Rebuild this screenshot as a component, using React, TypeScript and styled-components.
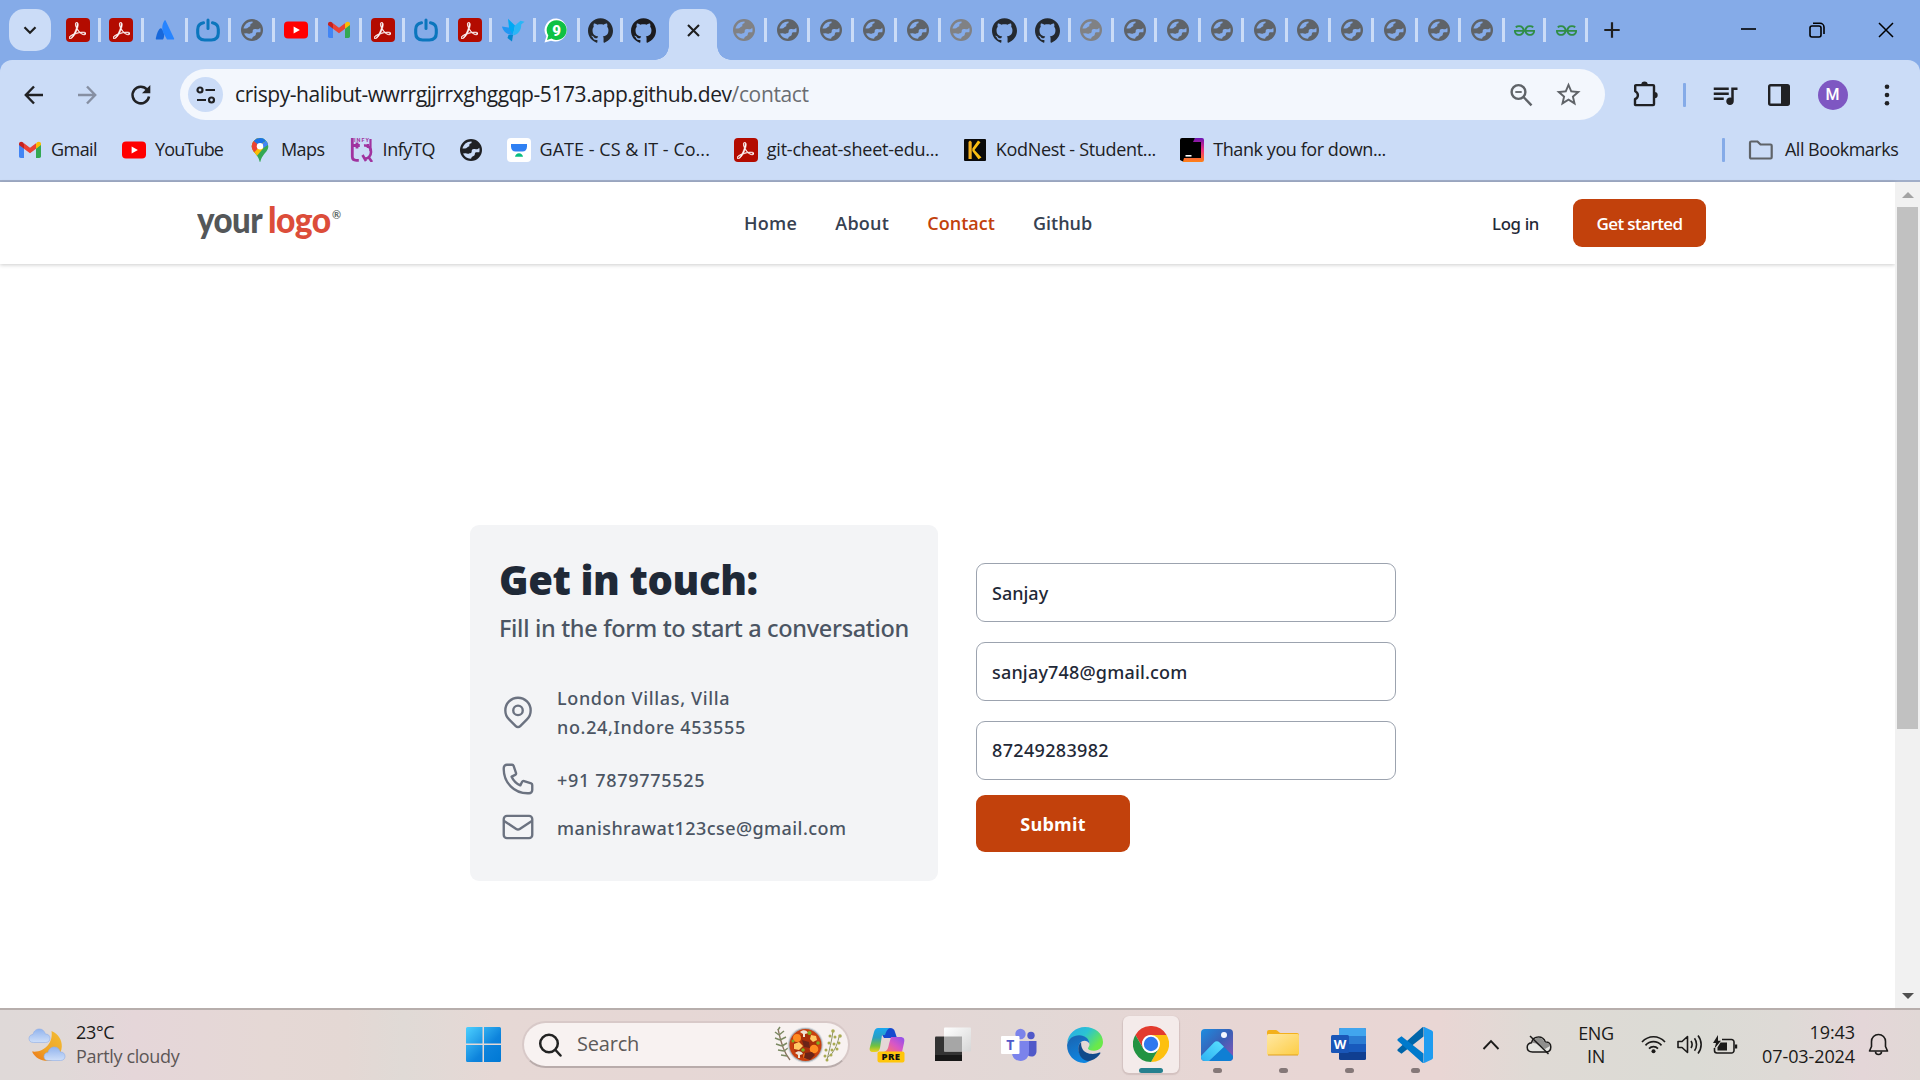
import React from 'react';
import styled, { createGlobalStyle } from 'styled-components';
import { SiGithub, SiGeeksforgeeks, SiAdobeacrobatreader } from 'react-icons/si';
import { MdQueueMusic, MdStarBorder } from 'react-icons/md';

const light = '"Open Sans", "Noto Sans", sans-serif';
const medium = '"Noto Sans", "Open Sans", sans-serif';

const GlobalStyle = createGlobalStyle`
  * { box-sizing: border-box; }
  body { margin: 0; background: #fff; }
  svg { display: block; flex: none; }
`;

const Screen = styled.div`
  width: 1920px;
  height: 1080px;
  display: flex;
  flex-direction: column;
  overflow: hidden;
  font-family: ${light};
  color: #202124;
`;

/* ---------- Tab strip ---------- */

const TabStrip = styled.div`
  height: 60px;
  flex: none;
  display: flex;
  align-items: center;
  background: #85abe8;
`;

const TabSearch = styled.div`
  width: 42px;
  height: 42px;
  margin: 0 6px 0 9px;
  border-radius: 15px;
  background: #cbdcf7;
  display: flex;
  align-items: center;
  justify-content: center;
`;

const Tab = styled.div<{ $w?: number; $last?: boolean }>`
  width: ${p => p.$w ?? 43.5}px;
  height: 24px;
  padding-left: 1px;
  flex: none;
  display: flex;
  align-items: center;
  justify-content: center;
  border-right: 3px solid ${p => (p.$last ? 'transparent' : '#cbdcf7')};
`;

const ActiveTab = styled.div`
  position: relative;
  width: 48px;
  height: 51px;
  flex: none;
  align-self: flex-end;
  margin: 0 6.5px 0 2.5px;
  padding-bottom: 9px;
  border-radius: 14px 14px 0 0;
  background: #cbdcf7;
  display: flex;
  align-items: center;
  justify-content: center;

  &::before,
  &::after {
    content: '';
    position: absolute;
    bottom: 0;
    width: 14px;
    height: 14px;
  }
  &::before {
    right: 100%;
    background: radial-gradient(circle at 0 0, transparent 13.5px, #cbdcf7 14px);
  }
  &::after {
    left: 100%;
    background: radial-gradient(circle at 100% 0, transparent 13.5px, #cbdcf7 14px);
  }
`;

const NewTab = styled.div`
  width: 24px;
  margin-left: 12px;
`;

const WindowControls = styled.div`
  display: flex;
  margin-left: auto;
`;

const WindowButton = styled.div`
  width: 68.6px;
  display: flex;
  justify-content: center;
`;

/* ---------- Toolbar ---------- */

const Chrome = styled.div`
  flex: none;
  background: #85abe8;
`;

const ChromeSurface = styled.div`
  height: 122px;
  background: #cbdcf7;
  border-bottom: 2px solid #a1aec8;
  border-radius: 12px 12px 0 0;
`;

const Toolbar = styled.div`
  height: 60px;
  padding-top: 9px;
  display: flex;
  align-items: center;
`;

const Navigation = styled.div`
  width: 180px;
  padding-left: 7px;
  display: flex;
`;

const Cell = styled.div<{ $w: number }>`
  width: ${p => p.$w}px;
  flex: none;
  display: flex;
  align-items: center;
  justify-content: center;
`;

const Omnibox = styled.div`
  width: 1425px;
  height: 51px;
  padding: 0 22px 0 8px;
  border-radius: 26px;
  background: #f3f7fd;
  display: flex;
  align-items: center;
`;

const SiteInfo = styled.div`
  width: 35px;
  height: 35px;
  margin-right: 12px;
  border-radius: 50%;
  background: #cbdcf7;
  display: flex;
  align-items: center;
  justify-content: center;
`;

const Url = styled.div`
  flex: 1;
  padding-bottom: 1px;
  font-size: 21px;
  line-height: 30px;
  letter-spacing: -0.43px;
  white-space: pre;
`;

const UrlPath = styled.span`
  color: #6a6d72;
  letter-spacing: -0.36px;
`;

const OmniboxIcons = styled.div`
  display: flex;
  align-items: center;
  gap: 20px;
  color: #5f6368;
`;

const Separator = styled.div`
  width: 3px;
  height: 24px;
  border-radius: 1px;
  background: #85abe8;
`;

const ToolbarActions = styled.div`
  display: flex;
  align-items: center;
  padding-left: 2px;

  ${Separator} {
    margin: 0 12px 0 -1px;
  }
`;

const Avatar = styled.div`
  width: 30px;
  height: 30px;
  border-radius: 50%;
  background: #7e57c2;
  color: #fff;
  font: 500 16px/30px Roboto, sans-serif;
  text-align: center;
`;

/* ---------- Bookmarks ---------- */

const Bookmarks = styled.div`
  height: 60px;
  padding-left: 18px;
  display: flex;
  align-items: center;
`;

const Bookmark = styled.div`
  display: flex;
  align-items: center;
  gap: 9px;
  margin-right: 24px;
`;

const BookmarkLabel = styled.span<{ $w: number; $track: number }>`
  width: ${p => p.$w}px;
  padding-bottom: 2px;
  font-size: 18px;
  line-height: 26px;
  letter-spacing: ${p => p.$track}px;
  white-space: pre;
`;

const AllBookmarks = styled.div`
  margin-left: auto;
  padding-right: 20px;
  display: flex;
  align-items: center;

  svg {
    margin: 0 11px 0 23px;
  }
`;

/* ---------- Web page ---------- */

const Viewport = styled.div`
  flex: 1;
  min-height: 0;
  display: flex;
`;

const Page = styled.div`
  width: 1895px;
  background: #fff;
`;

const Header = styled.header`
  height: 82px;
  padding: 0 189px 0 197px;
  display: flex;
  align-items: center;
  box-shadow: 0 1px 4px rgba(0, 0, 0, 0.2);
`;

const Logo = styled.div`
  width: 547px;
  padding-bottom: 4px;
  display: flex;
  align-items: flex-start;
`;

const LogoWord = styled.span<{ $w: number; $color: string; $scale: number }>`
  width: ${p => p.$w}px;
  padding-bottom: 4px;
  color: ${p => p.$color};
  font: 900 36.5px/44px Lato, sans-serif;
  letter-spacing: -0.6px;
  transform: scaleX(${p => p.$scale});
  transform-origin: left center;
  white-space: pre;
`;

const Registered = styled.span`
  padding-top: 10px;
  color: #66706e;
  font: 700 11px/16px Lato, sans-serif;
`;

const Nav = styled.nav`
  display: flex;
  gap: 38px;
`;

const NavLink = styled.a<{ $active?: boolean; $track?: number }>`
  color: ${p => (p.$active ? '#c2410c' : '#374151')};
  font: 600 18px/26px ${light};
  letter-spacing: ${p => p.$track ?? 0}px;
`;

const HeaderActions = styled.div`
  margin-left: auto;
  display: flex;
  align-items: center;
`;

const LogIn = styled.a`
  margin-right: 34px;
  padding-top: 1px;
  color: #1f2937;
  font: 500 16.8px/24px ${medium};
  letter-spacing: -0.35px;
`;

const PrimaryButton = styled.button<{ $w: number; $h: number; $size: number; $track: number; $weight: number }>`
  width: ${p => p.$w}px;
  height: ${p => p.$h}px;
  padding: 1px 0 0;
  border: 0;
  border-radius: 9px;
  background: #c2410c;
  color: #fff;
  font: ${p => p.$weight} ${p => p.$size}px/24px ${light};
  letter-spacing: ${p => p.$track}px;
`;

const Main = styled.main`
  padding: 261px 0 0 470px;
  display: flex;
  align-items: flex-start;
  gap: 38px;
`;

const Card = styled.section`
  width: 468px;
  height: 356px;
  padding: 30px 0 0 29px;
  border-radius: 9px;
  background: #f3f4f6;
`;

const Title = styled.h1`
  margin: 0;
  color: #1f2937;
  font: 900 40px/50px ${medium};
  letter-spacing: -0.4px;
  white-space: nowrap;
`;

const Subtitle = styled.p`
  margin: 5px 0 37px;
  color: #4b5563;
  font: 500 23.5px/36px ${medium};
  letter-spacing: -0.32px;
  white-space: nowrap;
`;

const ContactRow = styled.div<{ $gap?: number }>`
  margin-top: ${p => p.$gap ?? 0}px;
  min-height: 36px;
  display: flex;
  align-items: center;
  gap: 20px;
  color: #4b5563;
`;

const ContactText = styled.div<{ $track?: number }>`
  margin: 1px 0 -1px;
  font: 500 18px/29px ${medium};
  letter-spacing: ${p => p.$track ?? 0.65}px;
  white-space: pre-line;
`;

const ContactIcon = styled.svg`
  width: 38px;
  height: 38px;
  margin: -2px 0;
  fill: none;
  stroke: #6b7280;
  stroke-width: 1.5;
  stroke-linecap: round;
  stroke-linejoin: round;
`;

const Form = styled.form`
  padding-top: 38px;
  display: flex;
  flex-direction: column;
  align-items: flex-start;
`;

const Field = styled.input<{ $track?: number }>`
  width: 420px;
  height: 59.4px;
  margin-bottom: 19.5px;
  padding: 0 15px;
  border: 1px solid #9ca3af;
  border-radius: 9px;
  background: #fff;
  color: #1f2937;
  font: 500 18px/26px ${medium};
  letter-spacing: ${p => p.$track ?? 0}px;
  outline: none;
`;

const SubmitRow = styled.div`
  margin-top: -4.7px;
`;

const Scrollbar = styled.div`
  width: 25px;
  display: flex;
  flex-direction: column;
  align-items: center;
  justify-content: space-between;
  background: #f1f1f1;
`;

const Arrow = styled.div<{ $down?: boolean }>`
  width: 0;
  height: 0;
  margin: ${p => (p.$down ? '0 0 9px' : '10px 0 9px')};
  border: 6px solid transparent;
  border-top: ${p => (p.$down ? '6px solid #505050' : '0')};
  border-bottom: ${p => (p.$down ? '0' : '6px solid #a3a3a3')};
`;

const Thumb = styled.div`
  width: 21px;
  height: 522px;
  margin-bottom: auto;
  background: #c1c1c1;
`;

/* ---------- Taskbar ---------- */

const Taskbar = styled.div`
  height: 72px;
  padding-bottom: 1px;
  flex: none;
  display: flex;
  align-items: center;
  border-top: 2px solid #b7aeac;
  background: linear-gradient(90deg, #dfd9d8 0, #e0d9d8 3%, #e5d6d9 7%, #e5d8d5 14%, #e4d8d4 18%, #e0dad6 21%, #e6d8d5 26%, #e6d7d5 35%, #e4d7d6 48%, #e2d8d6 53%, #e7d6d4 63%, #e9d6d4 75%, #dfdad5 80%, #dbdbd5 88%, #dedad6 93%, #e4d6d8 97%, #e1d8d6 100%);
`;

const Weather = styled.div`
  width: 466px;
  padding-left: 28px;
  display: flex;
  align-items: center;
  gap: 10px;
`;

const Lines = styled.div<{ $align?: string; $w?: number; $lh: number; $track?: number; $lift?: number }>`
  width: ${p => (p.$w ? `${p.$w}px` : 'auto')};
  padding-bottom: ${p => p.$lift ?? 2}px;
  text-align: ${p => p.$align ?? 'left'};
  font-size: 18px;
  line-height: ${p => p.$lh}px;
  letter-spacing: ${p => p.$track ?? -0.35}px;
  color: #1b1a19;
  white-space: nowrap;
`;

const Muted = styled.div`
  color: #5c5656;
`;

const SearchBox = styled.div`
  width: 328px;
  height: 47px;
  margin: 0 4px 0 21px;
  padding: 0 6px 0 14px;
  display: flex;
  align-items: center;
  gap: 15px;
  border: 2px solid #d8c9c8;
  border-bottom-color: #b9acab;
  border-radius: 24px;
  background: #f8f2f1;
`;

const SearchText = styled.div`
  flex: 1;
  padding-bottom: 1px;
  color: #5d5a59;
  font-size: 20px;
  line-height: 28px;
  letter-spacing: -0.2px;
`;

const AppSlot = styled.div`
  position: relative;
  width: 66px;
  height: 69px;
  flex: none;
  display: flex;
  align-items: center;
  justify-content: center;
`;

const ActiveApp = styled.div`
  width: 56px;
  height: 57px;
  margin: 0 5px;
  padding-bottom: 1px;
  flex: none;
  display: flex;
  align-items: center;
  justify-content: center;
  position: relative;
  border-radius: 6px;
  background: #f4ebea;
  box-shadow: 0 1px 1px 1px rgba(120, 90, 90, 0.16);
`;

const Indicator = styled.div<{ $active?: boolean }>`
  position: absolute;
  bottom: ${p => (p.$active ? 0 : 6)}px;
  width: ${p => (p.$active ? 24 : 9)}px;
  height: 5px;
  border-radius: 3px;
  background: ${p => (p.$active ? '#26808f' : '#857878')};
`;

const Tray = styled.div`
  margin-left: 19px;
  display: flex;
  align-items: center;
`;

/* ---------- Favicons ---------- */

const PdfTile = styled.div`
  width: 24px;
  height: 24px;
  border-radius: 4px;
  background: #b30b00;
  color: #fff;
  display: flex;
  align-items: center;
  justify-content: center;
`;

const Pdf = () => (
  <PdfTile>
    <SiAdobeacrobatreader size={17} stroke="#fff" strokeWidth={0.8} />
  </PdfTile>
);

const Globe = ({ color = '#5f6368' }: { color?: string }) => (
  <svg width="24" height="24" viewBox="0 0 24 24" fill={color} fillRule="evenodd">
    <path d="M12 1a11 11 0 1 1 0 22 11 11 0 0 1 0-22zM12.500 3.400C8 3.200 4.200 6.500 3.500 10.600H6c2 0 2.300-2 4.300-2.300V7c0-1 .5-1.600 1.500-1.600.8 0 .9-1.100.7-2zM4 15.400c1.300 3 4.200 5.200 7.500 5.300 1.200 0 .7-1.300 1.600-2 1.300-1 2.700-.9 2.700-2.500s1-1.900 2-1.900h2.500c.4-1.700.3-3.200-.1-4.500-1.300 1.600-2.700 1.700-4.200 1.300-2-.5-3.300.2-3.300 2 0 1.500-.2 2-1.500 2.200-1.100.1-1.400.8-2.300.5-1.300-.5-1.800-.8-2.700-.6z" />
  </svg>
);

const Youtube = () => (
  <svg width="24" height="24" viewBox="0 0 24 24">
    <rect x="0" y="3.500" width="24" height="17" rx="4" fill="#f00" />
    <path d="M9.600 8.400v7.200l6.300-3.600z" fill="#fff" />
  </svg>
);

const Gmail = () => (
  <svg width="24" height="24" viewBox="0 0 24 24">
    <path d="M1 6v12.300c0 .9.7 1.700 1.700 1.700H6v-9.500z" fill="#4285f4" />
    <path d="M23 6v12.300c0 .9-.7 1.700-1.700 1.700H18v-9.500z" fill="#34a853" />
    <path d="M18 5.500v5.200l5-3.700V6c0-2.200-2.300-3-3.900-1.700z" fill="#fbbc04" />
    <path d="M6 10.700V5.200l6 4.500 6-4.500v5.500l-6 4.500z" fill="#ea4335" />
    <path d="M1 6v1l5 3.700V5.400L4.900 4.300C3.300 3 1 3.800 1 6z" fill="#c5221f" />
  </svg>
);

const Atlassian = () => (
  <svg width="24" height="24" viewBox="0 0 24 24">
    <path d="M8.500 10.500C6.800 8.800 4 14 2.800 20.600c-.1.600.2 1 .7 1h6.500c2-3.200 1.300-8.200-1.500-11.100z" fill="#1868db" />
    <path d="M11.500 2.600c-3 4.800-2.700 9.300-.7 13.200l2.900 5.300c.2.400.5.500.9.500h5.900c.5 0 .8-.5.600-1L12.600 2.600c-.3-.5-.8-.5-1.100 0z" fill="#2684ff" />
  </svg>
);

const Power = () => (
  <svg width="24" height="24" viewBox="0 0 24 24" fill="none" stroke="#0b76bd" strokeLinecap="round">
    <path d="M7.500 4.800C4 5.500 1.700 8 1.700 11.500V15c0 4.500 2.500 7 7 7h6.600c4.500 0 7-2.500 7-7v-3.500c0-3.500-2.300-6-5.800-6.700" strokeWidth="3.100" />
    <path d="M12 2v8.500" strokeWidth="3" />
  </svg>
);

const Bird = () => (
  <svg width="24" height="24" viewBox="0 0 24 24">
    <path d="M1 8.500l9 1.500 2 7.500C6.500 17 2 13.500 1 8.500z" fill="#2196f3" />
    <path d="M7 .8l7 6.700-2 9.500-4-7z" fill="#00a9f4" />
    <path d="M14 7.500l5.500-4.700 4 1-3.300 2.700C20.500 12 17 16.800 12 17.500z" fill="#29b6f6" />
    <path d="M7.500 17h4.500l-1 6.500-4.500-3.500z" fill="#0288d1" />
  </svg>
);

const Whatsapp = () => (
  <svg width="25" height="25" viewBox="0 0 25 25">
    <path d="M12.700.4A11.600 11.600 0 1 1 7 22.700L.5 24.500l1.900-6.300A11.600 11.600 0 0 1 12.700.4z" fill="#fff" />
    <path d="M12.700 2.200a9.900 9.900 0 1 1-5.200 18.300L3 21.900l1.300-4.500A9.900 9.900 0 0 1 12.700 2.200z" fill="#0fc143" />
    <text x="12.700" y="17.600" textAnchor="middle" fontFamily="Roboto, sans-serif" fontWeight="900" fontSize="15" fill="#fff">9</text>
  </svg>
);

const MapsPin = () => (
  <svg width="24" height="24" viewBox="0 0 24 24">
    <defs>
      <clipPath id="pin">
        <path d="M12 0a8.300 8.300 0 0 0-8.300 8.300c0 4 2.800 6 5.300 9.400C10.800 20 11.200 22 11.500 23.300c.1.900.9.900 1 0 .3-1.300.7-3.300 2.500-5.600 2.500-3.400 5.300-5.400 5.300-9.400A8.300 8.300 0 0 0 12 0z" />
      </clipPath>
    </defs>
    <g clipPath="url(#pin)">
      <path d="M0 0h24v24H0z" fill="#34a853" />
      <path d="M12 8.300L5.500 16 0 10V0h12z" fill="#fbbc04" />
      <path d="M20.500 4L8 19 4 14.500l9-10z" fill="#fbbc04" />
      <path d="M12 8.300L5 15.500-1 8 5.500 2z" fill="#ea4335" />
      <path d="M5.500 2.800L12 8.300 19 0H8z" fill="#1a73e8" />
      <path d="M12 8.300L19 1l2.500 5-6 4z" fill="#4285f4" />
    </g>
    <circle cx="12" cy="8.300" r="3.200" fill="#fff" />
  </svg>
);

const Infy = () => (
  <svg width="24" height="24" viewBox="0 0 24 24" fill="none" stroke="#a0339f">
    <text x="4" y="4.200" fontFamily="Roboto, sans-serif" fontWeight="700" fontSize="5.500" letterSpacing="1" fill="#a0339f" stroke="none">INFY</text>
    <path d="M2.300 0v18.500c0 2.500 1.500 3.800 4 3.800h2.500M2.300 7.500h7.500M7 4.500v6" strokeWidth="2.800" />
    <path d="M14 7.500c4-.5 7 2 7 6.500 0 3.500-2.500 6.500-6 6.500M12.500 17l3.500 6M22 24l-3.500-5M18 6v4" strokeWidth="2.600" />
    <path d="M20.500 1v12" strokeWidth="2.200" />
  </svg>
);

const Gate = () => (
  <svg width="24" height="24" viewBox="0 0 24 24">
    <rect width="24" height="24" rx="4" fill="#fff" />
    <path d="M4 6h16v2.500c0 3-1.800 5-4.500 5h-7C5.800 13.500 4 11.500 4 8.500z" fill="#2f80f3" />
    <path d="M8 18.700c.5-2.200 1.800-3.500 4-3.500s3.500 1.300 4 3.500z" fill="#08bd80" />
  </svg>
);

const KodNest = () => (
  <svg width="24" height="24" viewBox="-1 -1 24 24">
    <rect width="22" height="22" rx="1" fill="#0a0a0a" />
    <path d="M4.500 3L6 1.500 7.700 3v17H4.500z" fill="#f5b120" />
    <path d="M14 1.500l2.500 1.800-6 7.700 7 7.500-3 1.800L8.300 12v-2.500z" fill="#fbbf12" />
  </svg>
);

const JetBrains = () => (
  <svg width="24" height="24" viewBox="0 0 24 24">
    <defs>
      <linearGradient id="jb" x1="0" y1="0" x2="0" y2="1">
        <stop offset="0" stopColor="#6b12b4" />
        <stop offset=".5" stopColor="#f0317e" />
        <stop offset="1" stopColor="#ff8314" />
      </linearGradient>
    </defs>
    <path d="M15 0h7a2 2 0 0 1 2 2v20a2 2 0 0 1-2 2H3V20h17V4h-8z" fill="url(#jb)" />
    <path d="M2 0h13l-2 4h8v16H4l-1 3.500L0 22V2a2 2 0 0 1 2-2z" fill="#000" />
    <path d="M5.500 17.800h6" stroke="#fff" strokeWidth="1.600" />
  </svg>
);

const Extension = () => (
  <svg width="27" height="27" viewBox="0 0 27 27">
    <path d="M3.200 4.800c0-.4.300-.7.700-.7h17.200c.5 0 .9.400.9.900v18.200c0 .5-.4.900-.9.900H3.500c-.3 0-.5-.2-.5-.5v-5.400c1.700-.8 2.900-2.200 2.900-4s-1.200-3.200-2.700-4z" fill="none" stroke="#202124" strokeWidth="2.400" strokeLinejoin="round" />
    <path d="M9.300 3.800a3.200 3.200 0 0 1 6.400 0zM22.500 10.900a3.200 3.200 0 0 1 0 6.400z" fill="#202124" />
  </svg>
);

/* ---------- Taskbar icons ---------- */

const WeatherIcon = () => (
  <svg width="38" height="36" viewBox="0 0 38 36">
    <defs>
      <linearGradient id="moon" x1="1" y1="0" x2="0" y2="1">
        <stop offset="0" stopColor="#f3bd32" />
        <stop offset=".6" stopColor="#efa328" />
        <stop offset="1" stopColor="#ec7416" />
      </linearGradient>
      <linearGradient id="cloud" x1="0" y1="0" x2="0" y2="1">
        <stop offset="0" stopColor="#92b4ee" />
        <stop offset="1" stopColor="#cfdff9" />
      </linearGradient>
    </defs>
    <path d="M23.500 4c7 3 10.500 9 10.300 15.500C33.500 28 27 34 19.500 34 12.500 34 7 30.500 4 24.500 16 26 25.500 16 23.500 4z" fill="url(#moon)" />
    <path id="c" d="M5.500 15.500C2.500 15.500 1 14 1 11.500S3 7.500 5 7.500C6 3.500 8.500 2 11.500 2s5 2 5.800 5C20 7 22 8.500 22 11.200s-1.700 4.300-4.500 4.300z" fill="url(#cloud)" stroke="#8fafe8" strokeWidth=".6" />
    <use href="#c" x="15" y="18" />
  </svg>
);

const StartIcon = () => (
  <svg width="35" height="35" viewBox="0 0 35 35">
    <defs>
      <linearGradient id="win" gradientUnits="userSpaceOnUse" x1="0" y1="0" x2="35" y2="35">
        <stop offset="0" stopColor="#4cd0ff" />
        <stop offset=".6" stopColor="#0d83dc" />
        <stop offset="1" stopColor="#0078d4" />
      </linearGradient>
    </defs>
    <path d="M1.500 0h15v16.500H0v-15A1.500 1.500 0 0 1 1.500 0zM18 0h15.500A1.500 1.500 0 0 1 35 1.500v15H18zM0 18h16.500v17h-15A1.500 1.500 0 0 1 0 33.500zM18 18h17v15.500a1.500 1.500 0 0 1-1.500 1.500H18z" fill="url(#win)" />
  </svg>
);

const Soup = () => (
  <svg width="68" height="38" viewBox="0 0 68 38">
    <g fill="none" stroke="#7c8a63" strokeWidth="1.300">
      <path d="M4 3c2 10 5 23 12 31" stroke="#8a7460" />
      <path d="M5 9L1 6M5 9l5-4M6 14l-5-2M6 14l6-3M8 20l-6-2M8 20l5-3M10 25l-6-1M10 25l4-3M13 30l-6-1M4 4l2-3" strokeWidth="1.500" />
    </g>
    <circle cx="31.500" cy="19" r="18" fill="#dfe1e4" />
    <circle cx="31.500" cy="19" r="17" fill="#a9adb2" />
    <circle cx="31.500" cy="19" r="16" fill="#c8400f" />
    <circle cx="31.500" cy="20" r="12" fill="#a92f0a" />
    <circle cx="23" cy="12" r="4" fill="#ff8a1f" />
    <circle cx="40" cy="23" r="4.300" fill="#ff8c22" />
    <circle cx="32" cy="30" r="3" fill="#ef6f14" />
    <path d="M20 18l5-2 4 4-4 4-5-1zM37 9l5 1 1 4-4 2-3-3z" fill="#ffc964" />
    <path d="M28 14l7 2 1 6-6-1zM31 27l7-1 3 3-5 5-6-2z" fill="#6b2418" />
    <path d="M26 6c3-3 7-2 8 1l-3 1v3h-2V8zM21 27c3-3 7-2 8 1l-3 1v3h-2v-3z" fill="#efe3d3" />
    <circle cx="35.500" cy="7" r="2" fill="#7dae21" />
    <circle cx="44" cy="17" r="1.800" fill="#7dae21" />
    <circle cx="29" cy="24" r="1.800" fill="#7dae21" />
    <circle cx="19" cy="15" r="1.500" fill="#7dae21" />
    <g fill="none" stroke="#8e9468" strokeWidth="1">
      <path d="M53 34c2-9 5-20 6-29M54 31c5-3 9-11 11-20" />
    </g>
    <g fill="#a9ab52">
      <circle cx="59" cy="5" r="1.800" /><circle cx="56" cy="10" r="1.500" /><circle cx="61" cy="11" r="1.500" />
      <circle cx="66" cy="10" r="1.800" /><circle cx="55" cy="17" r="1.500" /><circle cx="60" cy="18" r="1.500" />
      <circle cx="65" cy="17" r="1.500" /><circle cx="52" cy="24" r="1.500" /><circle cx="58" cy="24" r="1.500" />
      <circle cx="63" cy="23" r="1.500" /><circle cx="51" cy="30" r="1.500" /><circle cx="57" cy="29" r="1.500" />
      <circle cx="53" cy="34" r="1.500" />
    </g>
  </svg>
);

const Copilot = () => (
  <svg width="36" height="36" viewBox="0 0 36 36">
    <defs>
      <linearGradient id="cpa" x1="0" y1="0" x2="0" y2="1">
        <stop offset="0" stopColor="#1aa7f0" />
        <stop offset=".4" stopColor="#2a9fc0" />
        <stop offset=".75" stopColor="#74c23d" />
        <stop offset="1" stopColor="#f1d11b" />
      </linearGradient>
      <linearGradient id="cpb" x1="1" y1="0" x2="0" y2="1">
        <stop offset="0" stopColor="#8b4ff0" />
        <stop offset=".5" stopColor="#d957c5" />
        <stop offset="1" stopColor="#ff7a5c" />
      </linearGradient>
    </defs>
    <path d="M9 1h12c3 0 4 1 5 4l2 6H15z" fill="#1549cf" />
    <path d="M9 1h12c-3 1-4 4-5 7h-3l-2 13c-1 3-2 4-5 4H4c-3 0-4-2-3-5L5 5c1-3 2-4 4-4z" fill="url(#cpa)" />
    <path d="M22 10h9c4 0 5 2 4 6l-2 9H15c3-1 4-3 5-8z" fill="url(#cpb)" />
    <rect x="8.500" y="24.500" width="27" height="11" rx="2" fill="#ffc60a" />
    <text x="22" y="33.200" textAnchor="middle" fontFamily="Open Sans, sans-serif" fontWeight="800" fontSize="9.500" letterSpacing=".5" fill="#111">PRE</text>
  </svg>
);

const TaskView = () => (
  <svg width="36" height="35" viewBox="0 0 36 35">
    <defs>
      <linearGradient id="tv" x1="0" y1="0" x2="1" y2="1">
        <stop offset="0" stopColor="#fff" />
        <stop offset="1" stopColor="#d6d6d6" />
      </linearGradient>
    </defs>
    <rect x="0" y="9.500" width="27" height="24.500" rx="1" fill="#333" />
    <path d="M0 28h27v6H0z" fill="#171717" />
    <rect x="9" y=".5" width="27" height="24" rx="1" fill="url(#tv)" />
    <path d="M9 9.500h18v15H9z" fill="#a6a6a6" />
  </svg>
);

const Teams = () => (
  <svg width="36" height="34" viewBox="0 0 36 34">
    <circle cx="30" cy="7.500" r="3.700" fill="#5059c9" />
    <path d="M26 13h9.500v10c0 3.500-2 5.500-5 5.500S26 27 26 24z" fill="#5059c9" />
    <circle cx="19.500" cy="6" r="5.200" fill="#7b83eb" />
    <path d="M11 13h17v11c0 5-3.500 9-8.500 9S11 29.500 11 24z" fill="#7b83eb" />
    <rect x="0" y="8" width="18.500" height="18" rx="1" fill="#fff" />
    <text x="9.200" y="22" textAnchor="middle" fontFamily="Open Sans, sans-serif" fontWeight="700" fontSize="14" fill="#5059c9">T</text>
  </svg>
);

const Edge = () => (
  <svg width="36" height="36" viewBox="0 0 36 36">
    <defs>
      <linearGradient id="eg" x1="0" y1="0" x2="1" y2=".6">
        <stop offset="0" stopColor="#2aa9e8" />
        <stop offset=".5" stopColor="#2bc3d2" />
        <stop offset=".95" stopColor="#6ae94a" />
      </linearGradient>
      <linearGradient id="eb" x1="0" y1="0" x2=".4" y2="1">
        <stop offset="0" stopColor="#1b62ae" />
        <stop offset="1" stopColor="#0f86e0" />
      </linearGradient>
    </defs>
    <path d="M.2 16C1 6.500 9 0 18 0c10 0 18 6.500 18 15 0 5-3.700 8.700-9 8.700-4 0-6-1.200-6-2.300 0-1 1.500-1.700 1.500-4.400C22.500 12.500 18 9 12.500 9 7 9 2.500 11.500.2 16z" fill="url(#eg)" />
    <path d="M.1 18C1 12 6 8.300 12.300 8.300c5.700 0 10.200 3.700 10.200 8.700-1-2-3-3.200-5-3.200-3.500 0-6 3.200-6 7.700 0 7.500 6 12.500 13 11C22 34.800 19.500 36 17 36 7 35.500-.3 27.500.1 18z" fill="url(#eb)" />
    <path d="M14.200 15.200c-2 1.500-2.900 3.800-2.900 6.300C11.300 30 18 35.600 24 33.600c4.500-1.600 7.500-4.300 9.300-7.200.4-.7-.2-1.100-.8-.8-5.500 2.400-14.200 1.800-17-3.600-1.300-2.400-1.500-4.900-1.300-6.800z" fill="#114a8b" />
  </svg>
);

const ChromeIcon = () => (
  <svg width="36" height="36" viewBox="0 0 36 36">
    <path d="M33.600 9A18 18 0 0 1 18 36l7.800-13.500L18 9z" fill="#fdc00f" />
    <path d="M2.400 9A18 18 0 0 1 33.600 9H18a9 9 0 0 0-8.500 6.200l.7 7.300z" fill="#e33b2e" />
    <path d="M2.400 9A18 18 0 0 0 18 36l7.800-13.500a9 9 0 0 1-15.600 0z" fill="#229342" />
    <circle cx="18" cy="18" r="9" fill="#fff" />
    <circle cx="18" cy="18" r="7.200" fill="#2f78ee" />
  </svg>
);

const Photos = () => (
  <svg width="32" height="32" viewBox="0 0 32 32">
    <defs>
      <linearGradient id="ph" x1="0" y1="0" x2="1" y2="1">
        <stop offset="0" stopColor="#1d8de0" />
        <stop offset=".5" stopColor="#3a5fb5" />
        <stop offset="1" stopColor="#8d55b8" />
      </linearGradient>
      <clipPath id="phc"><rect width="32" height="32" rx="4" /></clipPath>
      <linearGradient id="ph2" x1="0" y1="1" x2="1" y2="0">
        <stop offset="0" stopColor="#2bb0f2" />
        <stop offset="1" stopColor="#5ae2ff" />
      </linearGradient>
    </defs>
    <g clipPath="url(#phc)">
      <rect width="32" height="32" fill="url(#ph)" />
      <path d="M8 32l13-12.500c1.200-1.200 2.400-1.200 3.600 0L34 29v4z" fill="#0f7fd4" />
      <path d="M-1 28l14-14.500c1.600-1.600 4-1.600 5.600 0l4.400 4.300L8 32H-1z" fill="url(#ph2)" />
      <circle cx="23" cy="6" r="3" fill="#f4f8ff" />
    </g>
  </svg>
);

const Explorer = () => (
  <svg width="32" height="29" viewBox="0 0 32 29">
    <defs>
      <linearGradient id="fo" x1="0" y1="0" x2="1" y2="1">
        <stop offset="0" stopColor="#ffe8a3" />
        <stop offset="1" stopColor="#fdcd45" />
      </linearGradient>
    </defs>
    <path d="M0 2a2 2 0 0 1 2-2h7c1.500 0 3 3 4.500 3H30a2 2 0 0 1 2 2v8H0z" fill="#f3b01c" />
    <rect x="0" y="4" width="32" height="21" rx="1.500" fill="url(#fo)" />
    <path d="M1 25h30" stroke="#e0a11c" strokeWidth="1" />
  </svg>
);

const Word = () => (
  <svg width="36" height="33" viewBox="0 0 36 33">
    <rect x="8" y="0" width="27" height="32" rx="1.500" fill="#103f91" />
    <path d="M8 8h27v9H8z" fill="#2b7cd3" />
    <path d="M8 16h27v8H8z" fill="#185abd" />
    <path d="M9.500 0h24A1.500 1.500 0 0 1 35 1.500V8H8V1.500A1.500 1.500 0 0 1 9.500 0z" fill="#41a5ee" />
    <rect x="0" y="7" width="18" height="18" rx="1.500" fill="#1a56b8" />
    <text x="9" y="20.800" textAnchor="middle" fontFamily="Open Sans, sans-serif" fontWeight="700" fontSize="13" fill="#fff">W</text>
  </svg>
);

const VsCode = () => (
  <svg width="36" height="36" viewBox="0 0 36 36">
    <path d="M26.500 9.500L4.500 26.700 1 24.300c-.8-.6-.8-1.700 0-2.400L24.500.9c.6-.6 1.300-.9 2-.9z" fill="#0065a9" />
    <path d="M26.500 26.500L4.500 9.300 1 11.700c-.8.600-.8 1.700 0 2.400l23.500 21c.6.600 1.300.9 2 .9z" fill="#007acc" />
    <path d="M26.500.2c.4-.2.900-.2 1.300 0l7 3.300c.8.400 1.200 1 1.200 1.800v25.400c0 .8-.4 1.400-1.200 1.800l-7 3.300c-.6.300-1.600.2-2.300-.4.600.4 1.500 0 1.500-1V1.600c0-.8-.7-1.500-1.500-1z" fill="#1f9cf0" />
  </svg>
);

/* ---------- Data ---------- */

const leftTabs = [Pdf, Pdf, Atlassian, Power, Globe, Youtube, Gmail, Pdf, Power, Pdf, Bird, Whatsapp];

const Hub = ({ color = '#24292f' }: { color?: string }) => <SiGithub size={25} color={color} />;

const faded = '#808184';
const rightTabs: React.ReactNode[] = [
  <Globe color={faded} />, <Globe />, <Globe />, <Globe />, <Globe />, <Globe color={faded} />,
  <Hub />, <Hub />, <Globe color={faded} />,
  ...Array.from({ length: 9 }, () => <Globe />),
];

const bookmarks: { icon: React.ReactNode; label?: string; w?: number; track?: number }[] = [
  { icon: <Gmail />, label: 'Gmail', w: 47, track: -0.55 },
  { icon: <Youtube />, label: 'YouTube', w: 69, track: -0.85 },
  { icon: <MapsPin />, label: 'Maps', w: 44.6, track: -0.6 },
  { icon: <Infy />, label: 'InfyTQ', w: 52, track: -0.45 },
  { icon: <Globe color="#202124" /> },
  { icon: <Gate />, label: 'GATE - CS & IT - Co...', w: 170.2, track: 0.03 },
  { icon: <Pdf />, label: 'git-cheat-sheet-edu...', w: 172, track: -0.22 },
  { icon: <KodNest />, label: 'KodNest - Student...', w: 160.5, track: -0.33 },
  { icon: <JetBrains />, label: 'Thank you for down...', w: 172, track: -0.43 },
];

export default function App() {
  return (
    <Screen>
      <GlobalStyle />
      <TabStrip>
        <TabSearch>
          <svg width="14" height="14" viewBox="0 0 14 14" fill="none" stroke="#1f1f1f" strokeWidth="2.200">
            <path d="M1.500 4.200L7 9.700l5.500-5.500" />
          </svg>
        </TabSearch>
        {leftTabs.map((Icon, i) => (
          <Tab key={i} $w={43.55}><Icon /></Tab>
        ))}
        <Tab><Hub /></Tab>
        <Tab $last><Hub color="#1b1b1f" /></Tab>
        <ActiveTab>
          <svg width="13" height="13" viewBox="0 0 13 13" stroke="#1f1f1f" strokeWidth="2.100">
            <path d="M1 1l11 11M12 1L1 12" />
          </svg>
        </ActiveTab>
        {rightTabs.map((icon, i) => (
          <Tab key={i} $w={43.4}>{icon}</Tab>
        ))}
        {[0, 1].map(i => (
          <Tab key={i} $w={41.8}><SiGeeksforgeeks size={21} color="#2f8d46" /></Tab>
        ))}
        <NewTab>
          <svg width="24" height="24" viewBox="0 0 24 24" stroke="#1f1f1f" strokeWidth="2.200">
            <path d="M12 4.300v15.400M4.300 12h15.400" />
          </svg>
        </NewTab>
        <WindowControls>
          <WindowButton>
            <svg width="15" height="15" viewBox="0 0 15 15" stroke="#000" strokeWidth="1.600"><path d="M0 7h15" /></svg>
          </WindowButton>
          <WindowButton>
            <svg width="16" height="16" viewBox="0 0 16 16" fill="none" stroke="#000" strokeWidth="1.600">
              <rect x="1" y="4" width="11" height="11" rx="2" />
              <path d="M4 1.300h7a4 4 0 0 1 4 4V12" />
            </svg>
          </WindowButton>
          <WindowButton>
            <svg width="16" height="16" viewBox="0 0 16 16" stroke="#000" strokeWidth="1.500">
              <path d="M1 1l14 14M15 1L1 15" />
            </svg>
          </WindowButton>
        </WindowControls>
      </TabStrip>

      <Chrome>
        <ChromeSurface>
          <Toolbar>
            <Navigation>
              <Cell $w={53}>
                <svg width="24" height="24" viewBox="0 0 24 24" fill="none" stroke="#202124" strokeWidth="2.400">
                  <path d="M21 12H4.500M12 3.500L3.800 12l8.200 8.500" />
                </svg>
              </Cell>
              <Cell $w={53}>
                <svg width="24" height="24" viewBox="0 0 24 24" fill="none" stroke="#868fa2" strokeWidth="2.400">
                  <path d="M3 12h16.500M12 3.500l8.200 8.500-8.200 8.500" />
                </svg>
              </Cell>
              <Cell $w={56}>
                <svg width="24" height="24" viewBox="0 0 24 24">
                  <path d="M20 13.500A8.300 8.300 0 1 1 18.200 6.700" fill="none" stroke="#202124" strokeWidth="2.500" />
                  <path d="M21.300 2v8.300H13z" fill="#202124" />
                </svg>
              </Cell>
            </Navigation>
            <Omnibox>
              <SiteInfo>
                <svg width="22" height="20" viewBox="0 0 22 20" fill="none" stroke="#202124" strokeWidth="2.200">
                  <circle cx="5" cy="5" r="2.500" />
                  <path d="M10.500 5H20M2 15h9" />
                  <circle cx="16.500" cy="15" r="2.500" />
                </svg>
              </SiteInfo>
              <Url>
                crispy-halibut-wwrrgjjrrxghggqp-5173.app.github.dev<UrlPath>/contact</UrlPath>
              </Url>
              <OmniboxIcons>
                <svg width="26" height="26" viewBox="0 0 26 26" fill="none" stroke="#5f6368" strokeWidth="2.400">
                  <circle cx="10.500" cy="10" r="6.900" />
                  <path d="M15.500 15l8 8.300" />
                  <path d="M7.300 10h6.400" strokeWidth="1.800" />
                </svg>
                <MdStarBorder size={29} />
              </OmniboxIcons>
            </Omnibox>
            <ToolbarActions>
              <Cell $w={77}><Extension /></Cell>
              <Separator />
              <Cell $w={54}><MdQueueMusic size={30} /></Cell>
              <Cell $w={54}>
                <svg width="22" height="22" viewBox="0 0 22 22">
                  <rect x="1.200" y="1.200" width="19.600" height="19.600" rx="1.500" fill="none" stroke="#202124" strokeWidth="2.400" />
                  <path d="M13 1h8v20h-8z" fill="#202124" />
                </svg>
              </Cell>
              <Cell $w={53}><Avatar>M</Avatar></Cell>
              <Cell $w={55}>
                <svg width="6" height="22" viewBox="0 0 6 22" fill="#202124">
                  <circle cx="3" cy="2.700" r="2.300" /><circle cx="3" cy="11" r="2.300" /><circle cx="3" cy="19.300" r="2.300" />
                </svg>
              </Cell>
            </ToolbarActions>
          </Toolbar>
          <Bookmarks>
            {bookmarks.map((b, i) => (
              <Bookmark key={i}>
                {b.icon}
                {b.label && <BookmarkLabel $w={b.w!} $track={b.track!}>{b.label}</BookmarkLabel>}
              </Bookmark>
            ))}
            <AllBookmarks>
              <Separator />
              <svg width="26" height="24" viewBox="0 0 26 24" fill="none" stroke="#5f6368" strokeWidth="2.200">
                <path d="M3.200 3.500h6.300L12.500 6.500h10c.7 0 1.200.5 1.200 1.200v11.600c0 .7-.5 1.200-1.200 1.200H3.200c-.7 0-1.200-.5-1.200-1.200V4.700c0-.7.5-1.200 1.200-1.200z" />
              </svg>
              <BookmarkLabel $w={115} $track={-0.52}>All Bookmarks</BookmarkLabel>
            </AllBookmarks>
          </Bookmarks>
        </ChromeSurface>
      </Chrome>

      <Viewport>
        <Page>
          <Header>
            <Logo>
              <LogoWord $w={71} $color="#545759" $scale={0.905}>your</LogoWord>
              <LogoWord $w={64} $color="#dc4d3a" $scale={0.92}>logo</LogoWord>
              <Registered>®</Registered>
            </Logo>
            <Nav>
              <NavLink $track={0.3}>Home</NavLink>
              <NavLink $track={0.25}>About</NavLink>
              <NavLink $active $track={0.05}>Contact</NavLink>
              <NavLink>Github</NavLink>
            </Nav>
            <HeaderActions>
              <LogIn>Log in</LogIn>
              <PrimaryButton $w={133} $h={48} $size={17} $track={-0.6} $weight={600}>Get started</PrimaryButton>
            </HeaderActions>
          </Header>
          <Main>
            <Card>
              <Title>Get in touch:</Title>
              <Subtitle>Fill in the form to start a conversation</Subtitle>
              <ContactRow>
                <ContactIcon viewBox="0 0 24 24">
                  <path d="M17.657 16.657L13.414 20.900a1.998 1.998 0 01-2.827 0l-4.244-4.243a8 8 0 1111.314 0z" />
                  <path d="M15 11a3 3 0 11-6 0 3 3 0 016 0z" />
                </ContactIcon>
                <ContactText>{'London Villas, Villa\nno.24,Indore 453555'}</ContactText>
              </ContactRow>
              <ContactRow $gap={20}>
                <ContactIcon viewBox="0 0 24 24">
                  <path d="M3 5a2 2 0 012-2h3.280a1 1 0 01.948.684l1.498 4.493a1 1 0 01-.502 1.210l-2.257 1.130a11.042 11.042 0 005.516 5.516l1.130-2.257a1 1 0 011.210-.502l4.493 1.498a1 1 0 01.684.949V19a2 2 0 01-2 2h-1C9.716 21 3 14.284 3 6V5z" />
                </ContactIcon>
                <ContactText $track={0.7}>+91 7879775525</ContactText>
              </ContactRow>
              <ContactRow $gap={12}>
                <ContactIcon viewBox="0 0 24 24">
                  <path d="M3 8l7.890 5.260a2 2 0 002.220 0L21 8M5 19h14a2 2 0 002-2V7a2 2 0 00-2-2H5a2 2 0 00-2 2v10a2 2 0 002 2z" />
                </ContactIcon>
                <ContactText $track={0.43}>manishrawat123cse@gmail.com</ContactText>
              </ContactRow>
            </Card>
            <Form>
              <Field defaultValue="Sanjay" />
              <Field defaultValue="sanjay748@gmail.com" $track={0.18} />
              <Field defaultValue="87249283982" $track={0.33} />
              <SubmitRow>
                <PrimaryButton type="button" $w={154} $h={57} $size={18} $track={0.2} $weight={700}>Submit</PrimaryButton>
              </SubmitRow>
            </Form>
          </Main>
        </Page>
        <Scrollbar>
          <Arrow />
          <Thumb />
          <Arrow $down />
        </Scrollbar>
      </Viewport>

      <Taskbar>
        <Weather>
          <WeatherIcon />
          <Lines $lh={24}>
            <div>23°C</div>
            <Muted>Partly cloudy</Muted>
          </Lines>
        </Weather>
        <StartIcon />
        <SearchBox>
          <svg width="24" height="24" viewBox="0 0 24 24" fill="none" stroke="#222" strokeWidth="2.500" strokeLinecap="round">
            <circle cx="11" cy="10.500" r="8.800" />
            <path d="M17.500 17l5 5.500" />
          </svg>
          <SearchText>Search</SearchText>
          <Soup />
        </SearchBox>
        <AppSlot><Copilot /></AppSlot>
        <AppSlot><TaskView /></AppSlot>
        <AppSlot><Teams /></AppSlot>
        <AppSlot><Edge /></AppSlot>
        <ActiveApp><ChromeIcon /><Indicator $active /></ActiveApp>
        <AppSlot><Photos /><Indicator /></AppSlot>
        <AppSlot><Explorer /><Indicator /></AppSlot>
        <AppSlot><Word /><Indicator /></AppSlot>
        <AppSlot><VsCode /><Indicator /></AppSlot>
        <Tray>
          <Cell $w={48}>
            <svg width="18" height="12" viewBox="0 0 18 12" fill="none" stroke="#1b1a19" strokeWidth="1.900">
              <path d="M1.500 10L9 2.200l7.500 7.800" />
            </svg>
          </Cell>
          <Cell $w={48}>
            <svg width="26" height="20" viewBox="0 0 26 20">
              <path d="M6.500 17C3 17 1.200 15 1.200 12.300c0-2.500 1.800-4.300 4.300-4.600C6.500 4 9 2 12.500 2c3.300 0 5.800 2 6.800 5 3.500 0 5.500 2 5.500 5s-2 5-5 5z" fill="#e4e4e0" stroke="#1b1a19" strokeWidth="1.500" />
              <path d="M6.500 7.700C7.500 4.500 9.500 2.800 12.500 2.800c3 0 5.200 1.700 6.200 4.700 3 0 5 1.300 5.300 3.500l-5 3-9-5.500z" fill="#8f8f8d" />
              <path d="M4 1l18.500 18" stroke="#1b1a19" strokeWidth="1.500" />
            </svg>
          </Cell>
          <Lines $lh={23} $align="center" $w={66} $track={-0.3} $lift={0}>
            <div>ENG</div>
            <div>IN</div>
          </Lines>
          <Cell $w={6} />
          <Cell $w={36}>
            <svg width="25" height="19" viewBox="0 0 25 19" fill="none" stroke="#1b1a19" strokeWidth="1.700">
              <path d="M1 7c6.500-7 16.500-7 23 0M4.500 10.300c4.500-4.800 11.500-4.800 16 0M8 13.700c2.500-2.700 6.500-2.700 9 0" />
              <circle cx="12.500" cy="16.300" r="2" fill="#1b1a19" stroke="none" />
            </svg>
          </Cell>
          <Cell $w={36}>
            <svg width="25" height="21" viewBox="0 0 25 21" fill="none" stroke="#1b1a19" strokeWidth="1.600">
              <path d="M1 7.500h4l5.500-5v16l-5.500-5H1z" strokeLinejoin="round" />
              <path d="M14 7c1.300 2 1.300 5 0 7M17.500 4.200c2.700 3.600 2.700 9 0 12.600M21 1.500c4.200 5.300 4.200 12.700 0 18" />
            </svg>
          </Cell>
          <Cell $w={36}>
            <svg width="25" height="20" viewBox="0 0 25 20">
              <path d="M9 4.500h9.500a2.500 2.500 0 0 1 2.500 2.500v8.500a2.500 2.500 0 0 1-2.500 2.500H4a2.500 2.500 0 0 1-2.500-2.500V13" fill="none" stroke="#1b1a19" strokeWidth="1.600" />
              <path d="M7.500 7.500H14v8H4.500v-3z" fill="#1b1a19" />
              <path d="M22 9.500h2.200v4H22zM5 0L0 8h3l-1.500 5.500L8 5.800H5z" fill="#1b1a19" />
            </svg>
          </Cell>
          <Lines $lh={24} $align="right" $w={112} $track={-0.1}>
            <div>19:43</div>
            <div>07-03-2024</div>
          </Lines>
          <Cell $w={46}>
            <svg width="21" height="23" viewBox="0 0 21 23" fill="none" stroke="#1b1a19" strokeWidth="1.600" strokeLinejoin="round">
              <path d="M10.500 1.500c4 0 7 3 7 7v5l2 4.500h-18l2-4.500v-5c0-4 3-7 7-7z" />
              <path d="M7.500 18.500c0 4 6 4 6 0" />
            </svg>
          </Cell>
        </Tray>
      </Taskbar>
    </Screen>
  );
}
